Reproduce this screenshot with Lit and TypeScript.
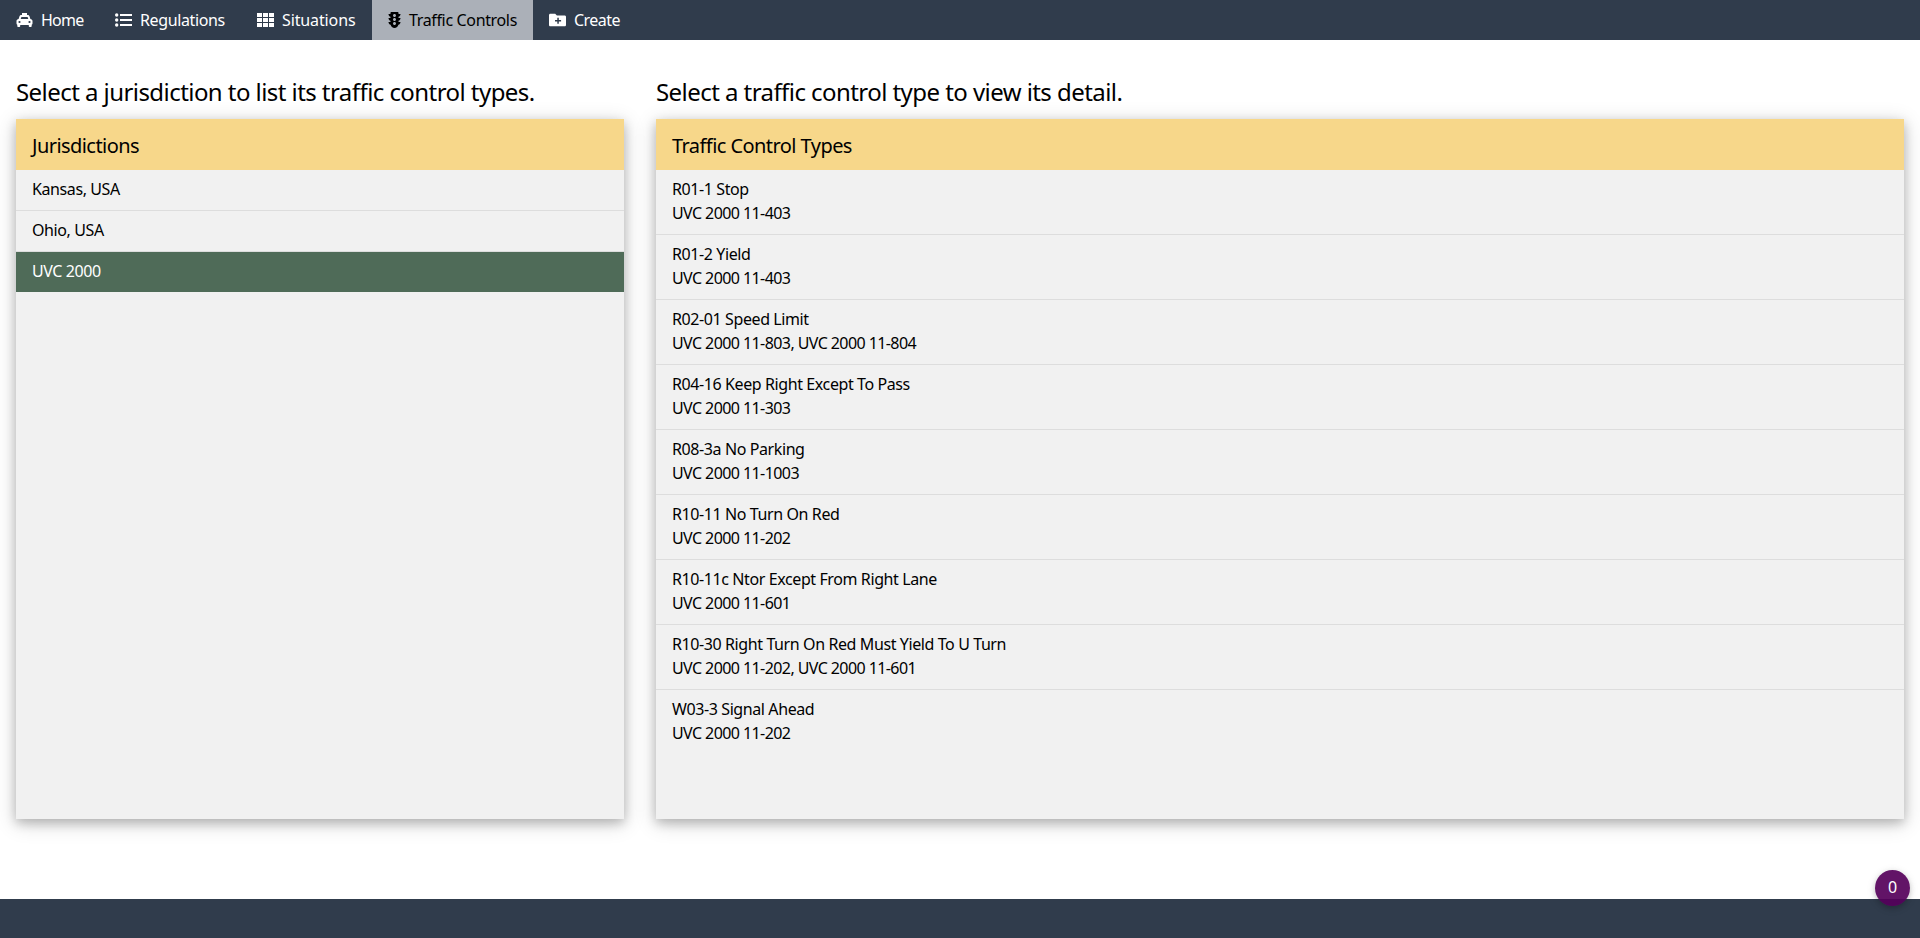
import { LitElement, html, css, svg } from "lit";
import { customElement, property } from "lit/decorators.js";
import { classMap } from "lit/directives/class-map.js";
import { styleMap } from "lit/directives/style-map.js";

const icons: Record<string, { box: string; body: unknown }> = {
  taxi: {
    box: "0 0 16 16",
    body: svg`<path fill-rule="evenodd" d="M5.500 1h5v2h.6c.9 0 1.600.5 1.900 1.300L13.900 7c1.200.1 2.100.9 2.100 2.100v2.400c0 .5-.3 1-.8 1.200V14.200c0 .5-.4.8-.8.8h-1.300c-.5 0-.8-.4-.8-.8V13H3.700v1.200c0 .5-.4.8-.8.8H1.600c-.5 0-.8-.4-.8-.8v-1.500C.3 12.500 0 12 0 11.500V9.100C0 7.900.9 7.100 2.100 7L3 4.300C3.300 3.500 4 3 4.900 3h.6zM4.900 5 4.200 7h7.600l-.7-2zM3 8.900a1.100 1.100 0 1 0 0 2.200 1.100 1.100 0 0 0 0-2.200zM13 8.900a1.100 1.100 0 1 0 0 2.200 1.100 1.100 0 0 0 0-2.200z"/>`,
  },
  list: {
    box: "0 0 17 16",
    body: svg`<circle cx="1.700" cy="3" r="1.700"/><circle cx="1.700" cy="8" r="1.700"/><circle cx="1.700" cy="13" r="1.700"/><path d="M5 2h12v2H5zM5 7h12v2H5zM5 12h12v2H5z"/>`,
  },
  grid: {
    box: "0 0 17 16",
    body: svg`<path d="M0 1h5v4H0zM6 1h5v4H6zM12 1h5v4h-5zM0 6h5v4H0zM6 6h5v4H6zM12 6h5v4h-5zM0 11h5v4H0zM6 11h5v4H6zM12 11h5v4h-5z"/>`,
  },
  light: {
    box: "0 0 384 512",
    body: svg`<path d="M384 192h-64v-37.880c37.200-13.220 64-48.380 64-90.120h-64V32c0-17.670-14.330-32-32-32H96C78.330 0 64 14.330 64 32v32H0c0 41.740 26.800 76.900 64 90.120V192H0c0 41.740 26.800 76.900 64 90.120V320H0c0 42.840 28.250 78.690 66.990 91.050C79.420 468.720 130.600 512 192 512s112.580-43.280 125.010-100.950C355.750 398.690 384 362.840 384 320h-64v-37.880c37.200-13.220 64-48.380 64-90.120zM192 416c-26.510 0-48-21.490-48-48s21.490-48 48-48 48 21.490 48 48-21.490 48-48 48zm0-128c-26.510 0-48-21.490-48-48s21.490-48 48-48 48 21.490 48 48-21.490 48-48 48zm0-128c-26.510 0-48-21.490-48-48s21.490-48 48-48 48 21.490 48 48-21.490 48-48 48z"/>`,
  },
  folder: {
    box: "0 0 17 16",
    body: svg`<path fill-rule="evenodd" d="M1.400 1.800h4.800l1.700 1.600h7.700c.8 0 1.400.6 1.400 1.400v8.100c0 .8-.6 1.400-1.400 1.400H1.400C.6 14.300 0 13.700 0 12.900V3.200c0-.8.6-1.400 1.400-1.400zM8.300 5.700V8H6v1.500h2.300v2.300h1.500V9.500h2.300V8H9.800V5.700z"/>`,
  },
};

@customElement("nav-item")
class NavItem extends LitElement {
  @property() icon = "";
  @property() label = "";
  @property({ type: Number }) tracking = 0;
  @property({ type: Boolean, reflect: true }) active = false;
  static styles = css`
    :host { display: flex; align-items: center; padding: 0 16px; gap: 8px; color: #fff; }
    :host([active]) { background: #abb0b8; color: #000; }
    svg { display: block; width: 17px; height: 16px; fill: currentColor; flex: none; }
    .light { width: 13px; }
    .label { white-space: nowrap; }
  `;
  render() {
    const i = icons[this.icon];
    return html`<svg class=${this.icon} viewBox=${i.box}>${i.body}</svg><span class="label" style=${styleMap({ letterSpacing: `${this.tracking}px` })}>${this.label}</span>`;
  }
}

@customElement("list-panel")
class ListPanel extends LitElement {
  @property() prompt = "";
  @property() heading = "";
  @property({ attribute: false }) rows: string[][] = [];
  @property({ type: Number }) selected = -1;
  static styles = css`
    :host { display: block; }
    .prompt { margin: 0; height: 47px; padding-top: 32px; font: 400 24px/40px "Noto Sans", sans-serif; letter-spacing: -0.56px; white-space: nowrap; }
    .panel { height: 700px; background: #f1f1f1; box-shadow: 0 4px 10px rgba(0,0,0,.2), 0 4px 20px rgba(0,0,0,.19); }
    .heading { height: 51px; box-sizing: border-box; margin: 0; padding: 3px 16px 0; background: #f7d78a; font: 400 20px/48px "Noto Sans", sans-serif; letter-spacing: -0.56px; }
    .row { padding: 7px 16px 9px; line-height: 24px; border-bottom: 1px solid #ddd; }
    .row:last-child { border-bottom: 0; }
    .selected { background: #4f6b58; color: #fff; }
    .line { display: block; letter-spacing: -0.4px; }
    .line + .line { letter-spacing: -0.58px; }
  `;
  render() {
    return html`<h2 class="prompt">${this.prompt}</h2>
      <section class="panel">
        <h3 class="heading">${this.heading}</h3>
        <div class="rows">${this.rows.map((r, n) => html`<div class=${classMap({ row: true, selected: n === this.selected })}>${r.map((t) => html`<span class="line">${t}</span>`)}</div>`)}</div>
      </section>`;
  }
}

const tabs = [
  { icon: "taxi", label: "Home", tracking: -0.75 },
  { icon: "list", label: "Regulations", tracking: -0.37 },
  { icon: "grid", label: "Situations", tracking: -0.12 },
  { icon: "light", label: "Traffic Controls", tracking: -0.35, active: true },
  { icon: "folder", label: "Create", tracking: -0.55 },
];
const jurisdictions = [["Kansas, USA"], ["Ohio, USA"], ["UVC 2000"]];
const types = [
  ["R01-1 Stop", "UVC 2000 11-403"],
  ["R01-2 Yield", "UVC 2000 11-403"],
  ["R02-01 Speed Limit", "UVC 2000 11-803, UVC 2000 11-804"],
  ["R04-16 Keep Right Except To Pass", "UVC 2000 11-303"],
  ["R08-3a No Parking", "UVC 2000 11-1003"],
  ["R10-11 No Turn On Red", "UVC 2000 11-202"],
  ["R10-11c Ntor Except From Right Lane", "UVC 2000 11-601"],
  ["R10-30 Right Turn On Red Must Yield To U Turn", "UVC 2000 11-202, UVC 2000 11-601"],
  ["W03-3 Signal Ahead", "UVC 2000 11-202"],
];

@customElement("app-root")
class AppRoot extends LitElement {
  static styles = css`
    :host { display: flex; flex-direction: column; height: 938px; background: #fff; color: #000; font: 400 16px/24px "Noto Sans", sans-serif; overflow: hidden; }
    .nav { display: grid; grid-template-columns: 99px 142px 131px 161px auto; justify-content: start; height: 40px; flex: none; background: #303c4c; }
    .main { flex: 1; display: grid; grid-template-columns: 608px 1248px; gap: 32px; padding: 0 16px; }
    .footer { height: 39px; flex: none; background: #303c4c; }
    .badge { position: absolute; left: 1875px; top: 870px; width: 35px; height: 36px; border-radius: 50%; background: rgba(85,0,90,.92); color: #fff; line-height: 35px; text-align: center; box-shadow: 0 2px 5px rgba(0,0,0,.16), 0 2px 10px rgba(0,0,0,.12); }
  `;
  render() {
    return html`
      <nav class="nav">
        ${tabs.map((t) => html`<nav-item icon=${t.icon} label=${t.label} .tracking=${t.tracking} ?active=${t.active}></nav-item>`)}
      </nav>
      <main class="main">
        <list-panel prompt="Select a jurisdiction to list its traffic control types." heading="Jurisdictions" .rows=${jurisdictions} selected="2"></list-panel>
        <list-panel prompt="Select a traffic control type to view its detail." heading="Traffic Control Types" .rows=${types}></list-panel>
      </main>
      <footer class="footer"></footer>
      <div class="badge">0</div>
    `;
  }
}
